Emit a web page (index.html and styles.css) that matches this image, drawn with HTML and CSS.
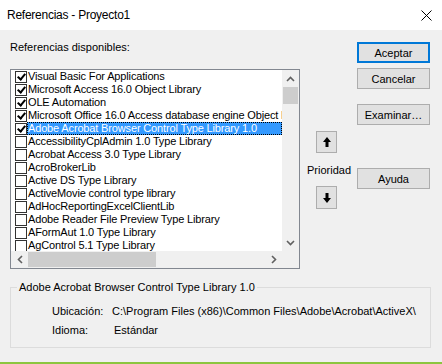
FILE: index.html
```html
<!DOCTYPE html>
<html lang="es">

<head>
    <meta charset="UTF-8">
    <meta name="viewport" content="width=device-width, initial-scale=1.0">
    <link rel="stylesheet" href="styles.css">
</head>

<body>
    <div class="window">
        <div class="titlebar">
            <span class="title">Referencias - Proyecto1</span>
            <svg class="close" width="11" height="11" viewBox="0 0 11 11">
                <path d="M0.5 0.5 L10.5 10.5 M10.5 0.5 L0.5 10.5" stroke="#000" stroke-width="1" fill="none" />
            </svg>
        </div>

        <div class="main">
            <div class="refs">
                <div class="refs-label">Referencias disponibles:</div>
                <div class="listbox">
                    <div class="list-area">
                        <ul class="items">
                            <li class="item"><span class="check checked"></span><span class="item-text">Visual Basic For Applications</span></li>
                            <li class="item"><span class="check checked"></span><span class="item-text">Microsoft Access 16.0 Object Library</span></li>
                            <li class="item"><span class="check checked"></span><span class="item-text">OLE Automation</span></li>
                            <li class="item"><span class="check checked"></span><span class="item-text">Microsoft Office 16.0 Access database engine Object Library</span></li>
                            <li class="item"><span class="check checked"></span><span class="item-text selected">Adobe Acrobat Browser Control Type Library 1.0</span></li>
                            <li class="item"><span class="check"></span><span class="item-text">AccessibilityCplAdmin 1.0 Type Library</span></li>
                            <li class="item"><span class="check"></span><span class="item-text">Acrobat Access 3.0 Type Library</span></li>
                            <li class="item"><span class="check"></span><span class="item-text">AcroBrokerLib</span></li>
                            <li class="item"><span class="check"></span><span class="item-text">Active DS Type Library</span></li>
                            <li class="item"><span class="check"></span><span class="item-text">ActiveMovie control type library</span></li>
                            <li class="item"><span class="check"></span><span class="item-text">AdHocReportingExcelClientLib</span></li>
                            <li class="item"><span class="check"></span><span class="item-text">Adobe Reader File Preview Type Library</span></li>
                            <li class="item"><span class="check"></span><span class="item-text">AFormAut 1.0 Type Library</span></li>
                            <li class="item"><span class="check"></span><span class="item-text">AgControl 5.1 Type Library</span></li>
                        </ul>
                        <div class="vscroll">
                            <div class="arrow">
                                <svg width="9" height="6" viewBox="0 0 9 6"><path d="M1 5 L4.5 1.5 L8 5" stroke="#606060" stroke-width="1.6" fill="none" /></svg>
                            </div>
                            <div class="vthumb"></div>
                            <div class="vtrack"></div>
                            <div class="arrow">
                                <svg width="9" height="6" viewBox="0 0 9 6"><path d="M1 1 L4.5 4.5 L8 1" stroke="#606060" stroke-width="1.6" fill="none" /></svg>
                            </div>
                        </div>
                    </div>
                    <div class="hscroll">
                        <div class="arrow">
                            <svg width="6" height="9" viewBox="0 0 6 9"><path d="M5 1 L1.5 4.5 L5 8" stroke="#606060" stroke-width="1.6" fill="none" /></svg>
                        </div>
                        <div class="hthumb"></div>
                        <div class="htrack"></div>
                        <div class="arrow">
                            <svg width="6" height="9" viewBox="0 0 6 9"><path d="M1 1 L4.5 4.5 L1 8" stroke="#606060" stroke-width="1.6" fill="none" /></svg>
                        </div>
                        <div class="corner"></div>
                    </div>
                </div>
            </div>

            <div class="priority">
                <button class="btn-move btn-up">
                    <svg width="8" height="10" viewBox="0 0 8 10"><path d="M4 0 L8 5 L5.5 5 L5.5 10 L2.5 10 L2.5 5 L0 5 Z" fill="#000" /></svg>
                </button>
                <div class="priority-label">Prioridad</div>
                <button class="btn-move btn-down">
                    <svg width="8" height="10" viewBox="0 0 8 10"><path d="M4 10 L8 5 L5.5 5 L5.5 0 L2.5 0 L2.5 5 L0 5 Z" fill="#000" /></svg>
                </button>
            </div>

            <div class="actions">
                <button class="btn btn-default">Aceptar</button>
                <button class="btn btn-cancel">Cancelar</button>
                <button class="btn btn-browse">Examinar…</button>
                <button class="btn btn-help">Ayuda</button>
            </div>
        </div>

        <fieldset class="info">
            <legend class="info-title">Adobe Acrobat Browser Control Type Library 1.0</legend>
            <div class="info-grid">
                <span class="info-label">Ubicación:</span>
                <span class="info-value">C:\Program Files (x86)\Common Files\Adobe\Acrobat\ActiveX\</span>
                <span class="info-label">Idioma:</span>
                <span class="info-value info-lang">Estándar</span>
            </div>
        </fieldset>

        <div class="edge"></div>
    </div>
</body>

</html>
```

FILE: styles.css
```css
* {
    box-sizing: border-box;
}

body {
    margin: 0;
    background-color: #f0f0f0;
    font-family: 'Liberation Sans', Arial, sans-serif;
    color: #000;
}

.window {
    width: 442px;
    height: 364px;
    display: flex;
    flex-direction: column;
    background-color: #f0f0f0;
    overflow: hidden;
}

/* title bar */
.titlebar {
    height: 30px;
    background-color: #ffffff;
    display: flex;
    align-items: center;
    justify-content: space-between;
    padding: 0 10px 0 7px;
}

.title {
    font-size: 12px;
    letter-spacing: -0.25px;
}

/* main area */
.main {
    display: flex;
    height: 239px;
}

.refs {
    width: 290px;
    margin-left: 10px;
}

.refs-label {
    margin-top: 10px;
    height: 14px;
    line-height: 14px;
    font-size: 11px;
}

.listbox {
    margin-top: 15px;
    width: 290px;
    height: 200px;
    border: 1px solid #828790;
    background-color: #ffffff;
    display: flex;
    flex-direction: column;
}

.list-area {
    display: flex;
    height: 181px;
}

.items {
    flex: 1;
    list-style: none;
    margin: 0;
    padding: 0;
    overflow: hidden;
}

.item {
    display: flex;
    height: 13px;
    padding-left: 4px;
    font-size: 11px;
    line-height: 13px;
    letter-spacing: -0.15px;
    white-space: nowrap;
}

.check {
    flex: none;
    width: 12px;
    height: 12px;
    margin-top: 1px;
    border: 1px solid #333333;
    background-color: #ffffff;
    position: relative;
}

.check.checked::after {
    content: '';
    position: absolute;
    left: 3px;
    top: 0px;
    width: 3px;
    height: 6px;
    border-right: 2px solid #000;
    border-bottom: 2px solid #000;
    transform: rotate(40deg);
}

.item-text {
    flex: 1;
    padding: 0 1px;
    overflow: hidden;
}

.item-text.selected {
    background-color: #3399ff;
    color: #ffffff;
    outline: 1px dotted #000;
    outline-offset: -1px;
}

/* scrollbars */
.vscroll {
    width: 17px;
    display: flex;
    flex-direction: column;
    background-color: #f0f0f0;
}

.arrow {
    width: 17px;
    height: 17px;
    display: flex;
    align-items: center;
    justify-content: center;
    flex: none;
}

.vthumb {
    height: 17px;
    margin: 0 1px;
    background-color: #cdcdcd;
}

.vtrack,
.htrack {
    flex: 1;
}

.hscroll {
    height: 17px;
    display: flex;
    background-color: #f0f0f0;
}

.hthumb {
    width: 128px;
    margin: 1px 0;
    background-color: #cdcdcd;
}

.corner {
    width: 17px;
    background-color: #f0f0f0;
}

/* priority */
.priority {
    width: 57px;
    padding-top: 101px;
    display: flex;
    flex-direction: column;
}

.btn-move {
    width: 21px;
    height: 22px;
    margin-left: 16px;
    padding: 0;
    border: 1px solid #adadad;
    background-color: #e1e1e1;
    display: flex;
    align-items: center;
    justify-content: center;
}

.btn-down {
    height: 23px;
    margin-top: 9px;
}

.priority-label {
    margin-top: 10px;
    margin-left: 7px;
    height: 14px;
    line-height: 14px;
    font-size: 11px;
}

/* dialog buttons */
.actions {
    width: 73px;
    padding-top: 12px;
    display: flex;
    flex-direction: column;
}

.btn {
    width: 73px;
    height: 21px;
    padding: 0;
    border: 1px solid #adadad;
    background-color: #e1e1e1;
    font-family: 'Liberation Sans', Arial, sans-serif;
    font-size: 11px;
    color: #000;
}

.btn-default {
    border: 2px solid #0078d7;
}

.btn-cancel {
    margin-top: 5px;
}

.btn-browse {
    margin-top: 15px;
}

.btn-help {
    margin-top: 43px;
}

/* info frame */
.info {
    margin: 11px 11px 0 10px;
    padding: 0;
    border: 1px solid #dcdcdc;
    font-size: 11px;
}

.info-title {
    margin-left: 6px;
    padding: 0 2px;
    line-height: 14px;
}

.info-grid {
    display: grid;
    grid-template-columns: 60px auto;
    padding: 8px 0 7px 41px;
    line-height: 19px;
    white-space: nowrap;
}

.info-lang {
    padding-left: 2px;
}

.edge {
    margin-top: auto;
    height: 2px;
    background-color: #8cc63f;
}
```
